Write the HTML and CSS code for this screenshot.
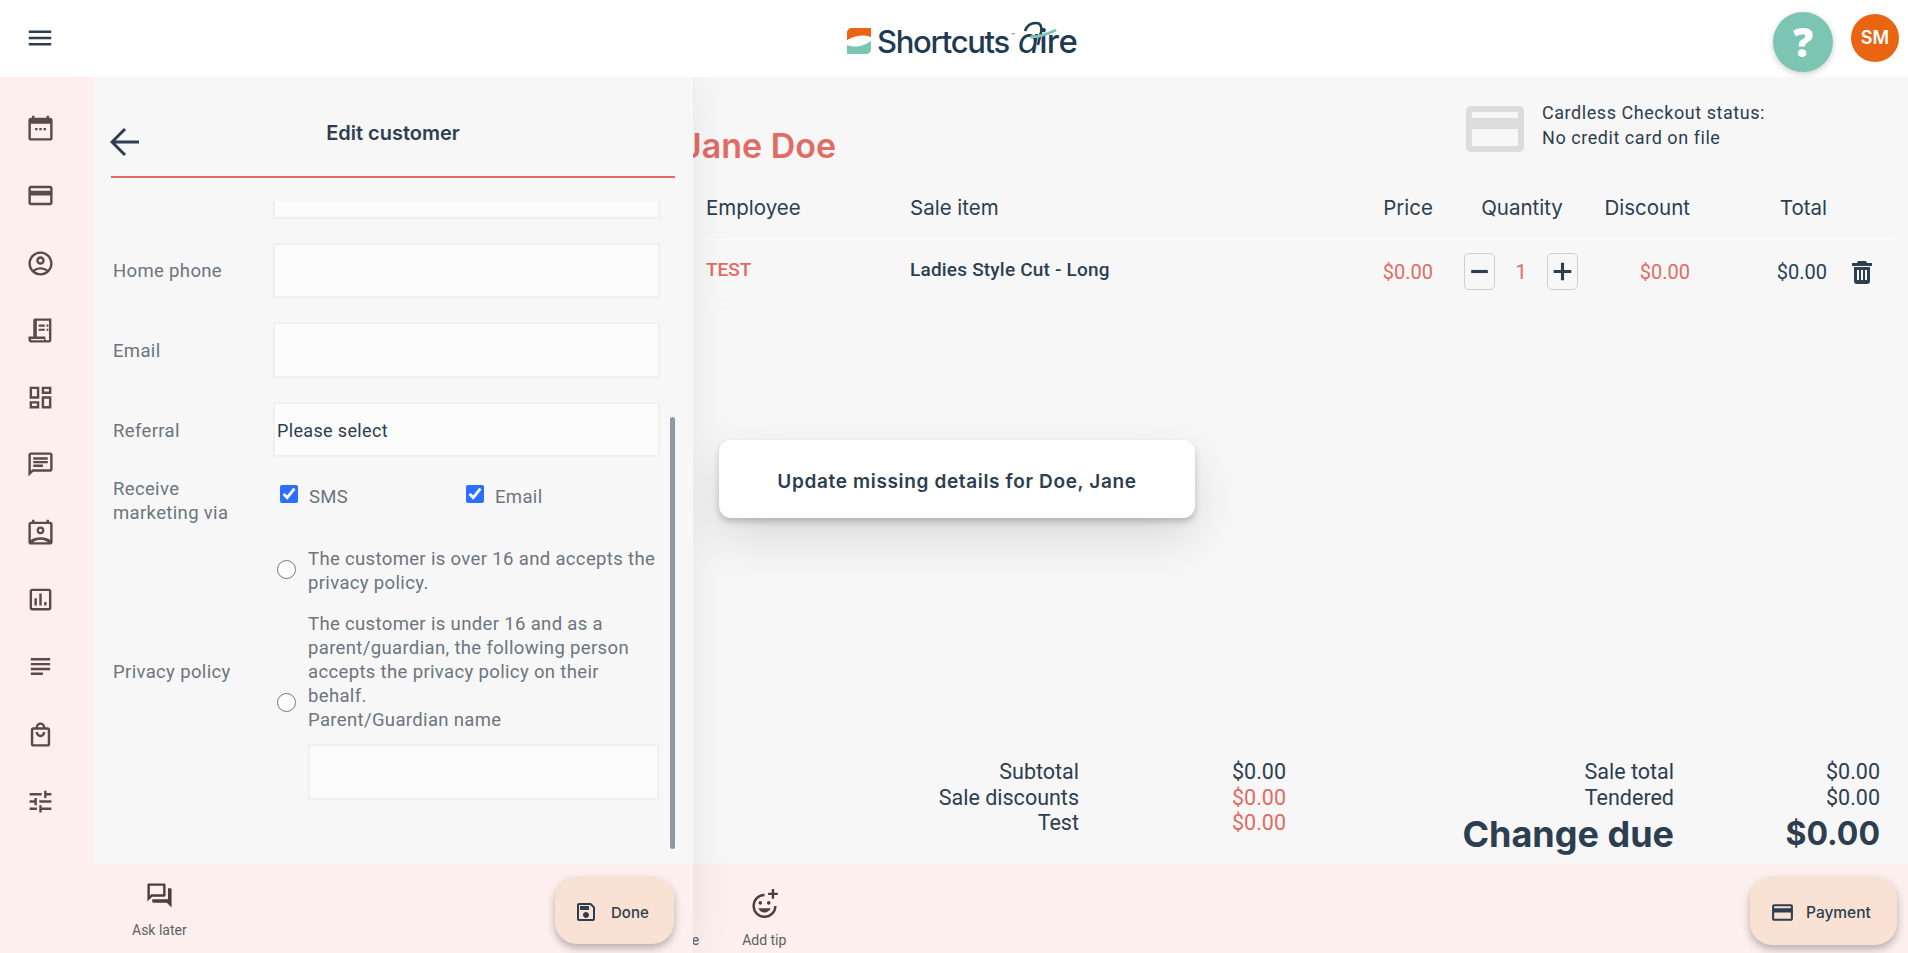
FILE: index.html
```html
<!doctype html>
<html lang="en">

<head>
    <meta charset="utf-8">
    <meta name="viewport" content="width=device-width, initial-scale=1, minimum-scale=1">
    <title>Shortcuts Aire - Sale</title>
    <link rel="stylesheet" href="styles.css">
</head>

<body>
    <div class="app">
        <header class="topbar">
            <svg class="menu-icon" viewBox="0 0 24 24"><path d="M3 18h18v-2H3v2zm0-5h18v-2H3v2zm0-7v2h18V6H3z" /></svg>
            <div class="logo">
                <svg class="logo-mark" viewBox="0 0 24 26">
                    <path fill="#e96511" d="M5 0h19v9c-6-2.500-14-2.500-24 3V5c0-3 2-5 5-5z" />
                    <path fill="#7cc5b2" d="M24 13v8c0 3-2 5-5 5H0v-9c7 2.500 15 2.500 24-4z" />
                </svg>
                <span class="logo-word">Shortcuts</span>
                <span class="logo-tm">™</span>
                <span class="logo-a">a</span><span class="logo-ire">ire</span>
                <svg class="logo-swoosh" viewBox="0 0 34 26"><path class="arc" d="M2 10C4 4 9 2 13 2c5 0 6 4 5 9l-3 13" /><path class="teal" d="M7 16c10 0 18-3 26-7" /></svg>
            </div>
            <div class="topbar-right">
                <button class="help-btn">?</button>
                <div class="avatar">SM</div>
            </div>
        </header>

        <nav class="sidebar">
            <svg viewBox="0 0 24 24"><path d="M20 3h-1V1.500h-2V3H7V1.500H5V3H4c-1.100 0-2 .9-2 2v15c0 1.100.9 2 2 2h16c1.100 0 2-.9 2-2V5c0-1.100-.9-2-2-2zm0 17H4V8h16v12z" /><path d="M7.500 11.500h2v2h-2zM11 11.500h2v2h-2zM14.500 11.500h2v2h-2z" /></svg>
            <svg viewBox="0 0 24 24"><path d="M20 4H4c-1.110 0-1.990.89-1.990 2L2 18c0 1.110.89 2 2 2h16c1.110 0 2-.89 2-2V6c0-1.110-.89-2-2-2zm0 14H4v-6h16v6zm0-10H4V6h16v2z" /></svg>
            <svg viewBox="0 0 24 24"><path d="M12 2C6.480 2 2 6.480 2 12s4.480 10 10 10 10-4.480 10-10S17.520 2 12 2zM7.350 18.500C8.660 17.560 10.260 17 12 17s3.340.56 4.650 1.500C15.340 19.440 13.740 20 12 20s-3.340-.56-4.650-1.500zm10.790-1.380C16.450 15.800 14.320 15 12 15s-4.450.8-6.140 2.120C4.700 15.730 4 13.950 4 12c0-4.420 3.580-8 8-8s8 3.580 8 8c0 1.950-.7 3.730-1.860 5.120z" /><path d="M12 6c-1.930 0-3.500 1.570-3.500 3.500S10.070 13 12 13s3.500-1.570 3.500-3.500S13.930 6 12 6zm0 5c-.83 0-1.500-.67-1.500-1.500S11.170 8 12 8s1.500.67 1.500 1.500S12.830 11 12 11z" /></svg>
            <svg viewBox="0 0 24 24"><path d="M7 2h14v18a2 2 0 0 1-2 2H5a3 3 0 0 1-3-3v-2h4V3zm2 2v13h7v2a1 1 0 0 0 1 1h2V4zM4 19a1 1 0 0 0 1 1h10v-1z" /><path d="M10.500 7h5v1.800h-5zM17 7h1.500v1.800H17zM10.500 10.500h5v1.800h-5zM17 10.500h1.500v1.800H17z" /></svg>
            <svg viewBox="0 0 24 24"><path d="M19 5v2h-4V5h4M9 5v6H5V5h4m10 8v6h-4v-6h4M9 17v2H5v-2h4M21 3h-8v6h8V3zM11 3H3v10h8V3zm10 8h-8v10h8V11zm-10 4H3v6h8v-6z" /></svg>
            <svg viewBox="0 0 24 24"><path d="M20 2H4c-1.100 0-2 .9-2 2v18l4-4h14c1.100 0 2-.9 2-2V4c0-1.100-.9-2-2-2zm0 14H5.170L4 17.170V4h16v12z" /><path d="M6 12h8v2H6zm0-3h12v2H6zm0-3h12v2H6z" /></svg>
            <svg viewBox="0 0 24 24"><path d="M20 3h-1V1.500h-2V3H7V1.500H5V3H4c-1.100 0-2 .9-2 2v15c0 1.100.9 2 2 2h16c1.100 0 2-.9 2-2V5c0-1.100-.9-2-2-2zm0 2v13.200C18.300 16.800 15.300 16 12 16s-6.300.8-8 2.200V5h16zM6 20c1.400-1 3.600-2 6-2s4.600 1 6 2H6z" /><path d="M12 7a3.200 3.200 0 1 0 0 6.400A3.200 3.200 0 0 0 12 7zm0 4.600a1.400 1.400 0 1 1 0-2.800 1.400 1.400 0 0 1 0 2.800z" /></svg>
            <svg viewBox="0 0 24 24"><path d="M19 3H5c-1.100 0-2 .9-2 2v14c0 1.100.9 2 2 2h14c1.100 0 2-.9 2-2V5c0-1.100-.9-2-2-2zm0 16H5V5h14v14z" /><path d="M7 11h2v6H7zm4-4h2v10h-2zm4 7h2v3h-2z" /></svg>
            <svg viewBox="0 0 24 24"><path d="M14 17H4v2h10v-2zm6-8H4v2h16V9zM4 15h16v-2H4v2zM4 5v2h16V5H4z" /></svg>
            <svg viewBox="0 0 24 24"><path d="M18 6h-2c0-2.210-1.790-4-4-4S8 3.790 8 6H6c-1.100 0-2 .9-2 2v12c0 1.100.9 2 2 2h12c1.100 0 2-.9 2-2V8c0-1.100-.9-2-2-2zm-6-2c1.100 0 2 .9 2 2h-4c0-1.100.9-2 2-2zm6 16H6V8h12v12z" /><path d="M8 10c0 2.400 1.800 4.200 4 4.200s4-1.800 4-4.200h-2c0 1.300-.9 2.200-2 2.200s-2-.9-2-2.200H8z" /></svg>
            <svg viewBox="0 0 24 24"><path d="M3 17v2h6v-2H3zM3 5v2h10V5H3zm10 16v-2h8v-2h-8v-2h-2v6h2zM7 9v2H3v2h4v2h2V9H7zm14 4v-2H11v2h10zm-6-4h2V7h4V5h-4V3h-2v6z" /></svg>
        </nav>

        <main class="sale">
            <div class="sale-top">
                <h1 class="customer-name">Jane Doe</h1>
                <div class="card-status">
                    <svg class="card-icon" viewBox="0 0 58 46"><path fill-rule="evenodd" d="M5 0h48a5 5 0 0 1 5 5v36a5 5 0 0 1-5 5H5a5 5 0 0 1-5-5V5a5 5 0 0 1 5-5zm1 6v6h46V6zm0 17v17h46V23z" /></svg>
                    <p>Cardless Checkout status:<br>No credit card on file</p>
                </div>
            </div>

            <div class="sale-row sale-head">
                <div>Employee</div>
                <div>Sale item</div>
                <div class="right">Price</div>
                <div class="center qty-head">Quantity</div>
                <div class="right">Discount</div>
                <div class="right">Total</div>
                <div></div>
            </div>
            <div class="sale-row sale-line">
                <div class="employee">TEST</div>
                <div class="item">Ladies Style Cut - Long</div>
                <div class="right red">$0.00</div>
                <div class="qty">
                    <button><svg viewBox="0 0 24 24"><path d="M4 10.500h16v3H4z" /></svg></button>
                    <span class="red">1</span>
                    <button><svg viewBox="0 0 24 24"><path d="M10.500 3.500h3v7h7v3h-7v7h-3v-7h-7v-3h7z" /></svg></button>
                </div>
                <div class="right red">$0.00</div>
                <div class="right">$0.00</div>
                <div class="right"><svg class="trash" viewBox="0 0 20 23"><path fill-rule="evenodd" d="M6 0h8l1 2h5v3H0V2h5zM2 6h16v14a3 3 0 0 1-3 3H5a3 3 0 0 1-3-3zm3 3v10h2V9zm4 0v10h2V9zm4 0v10h2V9z" /></svg></div>
            </div>

            <div class="totals">
                <dl class="totals-left">
                    <dt>Subtotal</dt>
                    <dd>$0.00</dd>
                    <dt>Sale discounts</dt>
                    <dd class="red">$0.00</dd>
                    <dt>Test</dt>
                    <dd class="red">$0.00</dd>
                </dl>
                <dl class="totals-right">
                    <dt>Sale total</dt>
                    <dd>$0.00</dd>
                    <dt>Tendered</dt>
                    <dd>$0.00</dd>
                    <dt class="due">Change due</dt>
                    <dd class="due due-value">$0.00</dd>
                </dl>
            </div>
        </main>

        <footer class="actions">
            <div class="action">
                <svg viewBox="0 0 24 24"></svg>
                <span>Add note</span>
            </div>
            <div class="action">
                <svg viewBox="0 0 24 24"><path d="M20 3V0h-2v3h-3v2h3v3h2V5h3V3h-3z" /><path d="M12 4a10 10 0 1 0 10 10h-2a8 8 0 1 1-8-8z" /><circle cx="8.500" cy="11.500" r="1.500" /><circle cx="15.500" cy="11.500" r="1.500" /><path d="M12 19.500c2.300 0 4.300-1.500 5.100-3.500H6.900c.8 2 2.800 3.500 5.100 3.500z" /></svg>
                <span>Add tip</span>
            </div>
            <button class="fab fab-payment">
                <svg viewBox="0 0 24 24"><path d="M20 4H4c-1.110 0-1.990.89-1.990 2L2 18c0 1.110.89 2 2 2h16c1.110 0 2-.89 2-2V6c0-1.110-.89-2-2-2zm0 14H4v-6h16v6zm0-10H4V6h16v2z" /></svg>
                Payment
            </button>
        </footer>

        <section class="panel">
            <div class="panel-head">
                <svg class="back-icon" viewBox="0 0 30 30"><path d="M29 15H3M15 2 2 15l13 13" /></svg>
                <h2>Edit customer</h2>
            </div>
            <div class="panel-body">
                <form class="customer-form">
                    <span></span><input type="text">
                    <label>Home phone</label><input type="text">
                    <label>Email</label><input type="text">
                    <label>Referral</label><div class="fake-select">Please select</div>
                    <label class="tall">Receive marketing via</label>
                    <div class="checks">
                        <label class="check"><input type="checkbox" checked>SMS</label>
                        <label class="check"><input type="checkbox" checked>Email</label>
                    </div>
                    <label class="policy-label">Privacy policy</label>
                    <div class="policy">
                        <div class="policy-opt">
                            <input type="radio" name="policy">
                            <div>The customer is over 16 and accepts the privacy policy.</div>
                        </div>
                        <div class="policy-opt">
                            <input type="radio" name="policy">
                            <div>
                                The customer is under 16 and as a parent/guardian, the following person accepts the privacy policy on their behalf.<br>
                                Parent/Guardian name
                                <input class="guardian" type="text">
                            </div>
                        </div>
                    </div>
                </form>
                <div class="scroll-thumb"></div>
            </div>
            <div class="panel-foot">
                <div class="action">
                    <svg viewBox="0 0 24 24"><path d="M15 4v7H5.170L4 12.170V4h11m1-2H3c-.55 0-1 .45-1 1v14l4-4h10c.55 0 1-.45 1-1V3c0-.55-.45-1-1-1zm5 4h-2v9H6v2c0 .55.45 1 1 1h11l4 4V7c0-.55-.45-1-1-1z" /></svg>
                    <span>Ask later</span>
                </div>
                <button class="fab fab-done">
                    <svg viewBox="0 0 24 24"><path d="M17 3H5c-1.110 0-2 .9-2 2v14c0 1.100.89 2 2 2h14c1.100 0 2-.9 2-2V7l-4-4zm2 16H5V5h11.170L19 7.830V19zm-7-7c-1.660 0-3 1.340-3 3s1.340 3 3 3 3-1.340 3-3-1.340-3-3-3zM6 6h9v4H6z" /></svg>
                    Done
                </button>
            </div>
        </section>

        <div class="toast">Update missing details for Doe, Jane</div>
    </div>
</body>

</html>
```

FILE: styles.css
```css
* {
    box-sizing: border-box;
}

body {
    margin: 0;
    font-family: Roboto, sans-serif;
    color: #2c3e50;
    background: #f7f7f7;
    overflow: hidden;
}

button {
    font-family: inherit;
    color: inherit;
    cursor: pointer;
}

.app {
    position: relative;
    display: grid;
    grid-template-rows: 77px 786px 90px;
    grid-template-columns: 93px 1fr;
    height: 953px;
    overflow: hidden;
}

.right {
    text-align: right;
}

.center {
    text-align: center;
}

.red {
    color: #e06c64;
}

/* top bar */
.topbar {
    grid-column: 1 / 3;
    z-index: 4;
    display: flex;
    align-items: center;
    background: #fff;
    padding: 0 9px 0 25px;
    position: relative;
}

.menu-icon {
    width: 30px;
    height: 30px;
    margin-top: -1px;
    fill: #2c3e50;
}

.logo {
    position: absolute;
    left: 847px;
    top: 22px;
    display: flex;
    align-items: center;
    height: 38px;
    color: #1f3a52;
    font-family: Inter, sans-serif;
}

.logo-mark {
    width: 24px;
    height: 26px;
    margin-right: 6px;
}

.logo-word {
    font-size: 31px;
    font-weight: 500;
    letter-spacing: -1.300px;
}

.logo-tm {
    font-size: 6px;
    margin: -12px 3px 0 2px;
}

.logo-a {
    font-size: 35px;
    font-weight: 400;
    font-style: italic;
    margin-top: -3px;
}

.logo-ire {
    font-size: 33px;
    font-weight: 500;
    letter-spacing: -.6px;
    margin-top: -1px;
}

.logo-swoosh {
    position: absolute;
    left: 176px;
    top: -1px;
    width: 34px;
    height: 26px;
    fill: none;
    stroke-width: 2.500;
}

.logo-swoosh .arc {
    stroke: #1f3a52;
}

.logo-swoosh .teal {
    stroke: #7cc5b2;
    stroke-width: 3;
}

.topbar-right {
    margin-left: auto;
    display: flex;
    align-items: center;
    gap: 18px;
}

.help-btn {
    width: 60px;
    height: 60px;
    margin-top: 7px;
    border: 0;
    border-radius: 50%;
    background: #7cc5b2;
    color: #fff;
    font-family: "Open Sans", sans-serif;
    font-size: 40px;
    font-weight: 800;
    line-height: 60px;
    padding: 0;
    box-shadow: 0 2px 6px rgba(0, 0, 0, .2);
}

.avatar {
    width: 48px;
    height: 48px;
    margin-top: -1px;
    border-radius: 50%;
    background: #e96511;
    color: #fff;
    font-family: Inter, sans-serif;
    font-size: 18px;
    font-weight: 600;
    line-height: 48px;
    text-align: center;
}

/* left nav */
.sidebar {
    grid-row: 2 / 4;
    z-index: 3;
    display: flex;
    flex-direction: column;
    align-items: center;
    gap: 38.300px;
    padding: 37px 13px 0 0;
    background: #fdefed;
}

.sidebar svg {
    flex: none;
    width: 29px;
    height: 29px;
    fill: #5c4a46;
}

/* sale area behind the panel */
.sale {
    display: flex;
    flex-direction: column;
    padding: 0 15px 3px 589px;
}

.sale-top {
    height: 107px;
    display: flex;
    justify-content: space-between;
}

.customer-name {
    margin: 47px 0 0;
    font-family: Inter, sans-serif;
    font-size: 34px;
    font-weight: 600;
    line-height: 44px;
    color: #e06c64;
}

.card-status {
    display: flex;
    gap: 18px;
    padding: 29px 0 0;
    width: 427px;
}

.card-status p {
    margin: -6px 0 0;
    font-size: 18px;
    line-height: 25px;
    letter-spacing: .55px;
}

.card-icon {
    width: 58px;
    height: 46px;
    fill: #dcdcdc;
}

.sale-row {
    display: grid;
    grid-template-columns: 204px 457px 66px 168px 89px 137px 66px;
    align-items: center;
    margin-left: 24px;
}

.sale-head {
    height: 56px;
    padding-bottom: 7px;
    font-family: Inter, sans-serif;
    font-size: 20.500px;
    font-weight: 400;
    border-bottom: 2px solid #fbfbfb;
}

.qty-head {
    padding-left: 10px;
}

.sale-line {
    height: 65px;
    font-size: 20px;
    border-bottom: 2px solid #fbfbfb;
}

.employee {
    color: #e06c64;
    font-size: 19px;
    font-weight: 500;
    margin-top: -4px;
}

.item {
    font-size: 19px;
    font-weight: 500;
    letter-spacing: .2px;
    margin-top: -4px;
}

.qty {
    width: 114px;
    margin-left: 31px;
    display: flex;
    align-items: center;
    justify-content: space-between;
}

.qty button {
    width: 31px;
    height: 37px;
    padding: 0;
    border: 1px solid #cfcfcf;
    border-radius: 5px;
    background: #f7f7f7;
    display: flex;
    align-items: center;
    justify-content: center;
}

.qty svg {
    width: 25px;
    height: 25px;
    fill: #2c3e50;
}

.trash {
    width: 20px;
    height: 23px;
    margin-right: 21px;
    fill: #2c3e50;
    vertical-align: middle;
}

.totals {
    margin-top: auto;
    display: flex;
    justify-content: flex-end;
    font-size: 21.500px;
}

.totals dl {
    margin: 0;
    display: grid;
    align-content: start;
    grid-auto-rows: 25.500px;
    line-height: 25.500px;
}

.totals dt,
.totals dd {
    margin: 0;
    text-align: right;
}

.totals-left {
    grid-template-columns: 300px 207px;
    margin-right: 168px !important;
}

.totals-right {
    grid-template-columns: 220px 206px;
    grid-template-rows: 25.500px 25.500px 50px;
    margin-right: 13px !important;
}

.totals .due {
    font-family: Inter, sans-serif;
    font-size: 36px;
    font-weight: 700;
    line-height: 48px;
}

.totals .due-value {
    font-size: 32px;
}

/* bottom bar */
.actions {
    display: flex;
    align-items: flex-start;
    gap: 43px;
    padding: 14px 11px 0 550px;
    background: #fdefed;
}

.action {
    display: flex;
    flex-direction: column;
    align-items: center;
    gap: 12px;
    font-size: 14px;
    line-height: 17px;
    color: #5f5f5f;
}

.action svg {
    width: 29px;
    height: 29px;
    fill: #4e3f3b;
}

.actions .action {
    margin-top: 12px;
    gap: 14px;
}

.fab {
    display: flex;
    align-items: center;
    border: 0;
    border-radius: 22px;
    background: #f9e2d3;
    font-family: Inter, sans-serif;
    font-size: 15.500px;
    font-weight: 500;
    box-shadow: 0 4px 8px rgba(0, 0, 0, .28);
}

.fab svg {
    fill: #2c3e50;
    flex: none;
}

.fab-payment {
    margin-left: auto;
    width: 147px;
    height: 68px;
    gap: 11px;
    padding: 3px 0 0 20px;
}

.fab-payment svg {
    width: 25px;
    height: 25px;
}

.fab-done {
    margin-left: auto;
    margin-right: 19px;
    margin-top: 14px;
    width: 119px;
    height: 67px;
    gap: 13px;
    padding: 3px 0 0 19px;
    font-size: 15px;
}

.fab-done svg {
    width: 24px;
    height: 24px;
}

/* slide-over panel */
.panel {
    position: absolute;
    left: 93px;
    top: 77px;
    bottom: 0;
    z-index: 2;
    width: 600px;
    display: flex;
    flex-direction: column;
    background: #f7f7f7;
    box-shadow: 0 0 40px rgba(0, 0, 0, .08);
}

.panel-head {
    position: relative;
    height: 101px;
    margin: 0 18px;
    border-bottom: 2px solid #e06c64;
}

.panel-head h2 {
    margin: 0;
    padding-top: 43px;
    text-align: center;
    font-family: Inter, sans-serif;
    font-size: 20px;
    font-weight: 600;
    line-height: 26px;
}

.back-icon {
    position: absolute;
    left: -1px;
    top: 50px;
    width: 30px;
    height: 30px;
    fill: none;
    stroke: #2c3e50;
    stroke-width: 3;
}

.panel-body {
    position: relative;
    flex: 1;
    margin-top: 23px;
    overflow: hidden;
}

.customer-form {
    display: grid;
    grid-template-columns: 160px 387px;
    align-items: center;
    row-gap: 24px;
    margin: -38px 0 0 20px;
    font-size: 18.500px;
    letter-spacing: .35px;
    color: #6b7580;
}

.customer-form > label {
    padding-top: 2px;
}

.customer-form input[type=text],
.fake-select {
    display: block;
    width: 100%;
    height: 55.600px;
    border: 2px solid #f0f0f0;
    background: #fcfcfc;
}

.fake-select {
    padding-left: 2px;
    font-size: 18px;
    line-height: 53px;
    color: #2c3e50;
}

.customer-form > .tall {
    padding-top: 0;
    line-height: 24px;
    width: 120px;
    margin-top: -4px;
}

.checks {
    display: flex;
    margin-top: -12px;
}

.check {
    display: flex;
    align-items: center;
    width: 186px;
    padding-left: 7px;
}

.check input {
    width: 18px;
    height: 18px;
    margin: -7px 11px 0 0;
    accent-color: #2a6fff;
}

.customer-form > .policy-label {
    margin-top: -8px;
}

.policy {
    display: flex;
    flex-direction: column;
    gap: 17px;
    margin-top: -2px;
}

.policy-opt {
    display: flex;
    align-items: center;
    line-height: 24px;
}

.policy-opt > input {
    flex: none;
    width: 19px;
    height: 19px;
    margin: -3px 12px 0 4px;
}

.policy-opt + .policy-opt > input {
    margin-top: -8px;
}

.customer-form input.guardian {
    width: 351px;
    margin-top: 12px;
}

.scroll-thumb {
    position: absolute;
    left: 577px;
    top: 216px;
    width: 5px;
    height: 432px;
    border-radius: 3px;
    background: #8e99a4;
}

.panel-foot {
    height: 90px;
    display: flex;
    align-items: flex-start;
    padding: 18px 0 0 39px;
    background: #fdefed;
}

.panel-foot .action {
    gap: 12px;
}

.panel-foot .fab {
    margin-top: -4px;
}

.toast {
    position: absolute;
    left: 719px;
    top: 440px;
    z-index: 1;
    width: 476px;
    height: 78px;
    border-radius: 12px;
    background: #fff;
    box-shadow: 0 4px 6px rgba(0, 0, 0, .2), 0 20px 50px rgba(0, 0, 0, .12);
    font-family: Inter, sans-serif;
    font-size: 19px;
    font-weight: 600;
    letter-spacing: .65px;
    line-height: 83px;
    text-align: center;
}
```
